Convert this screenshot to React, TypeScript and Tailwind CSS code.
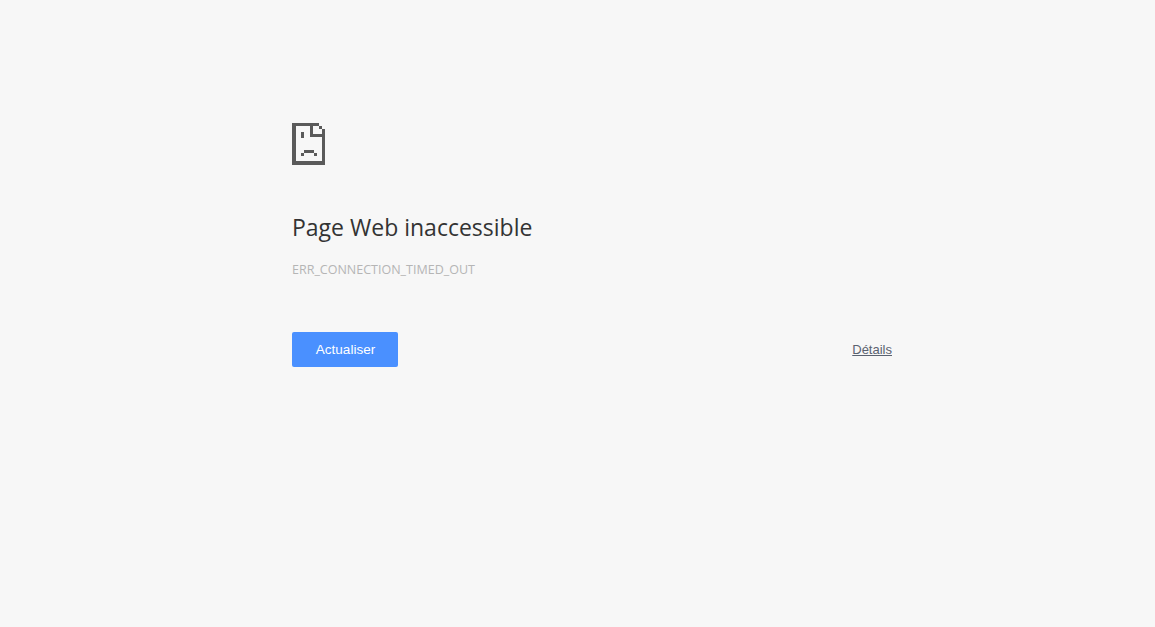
// Chrome style network error page
const rects: [number, number, number, number][] = [
  // outline
  [0, 0, 27, 3],
  [0, 0, 4, 42],
  [0, 38, 33, 4],
  [30, 6, 3, 36],
  [27, 3, 3, 3],
  // fold
  [18, 0, 3, 14],
  [18, 11, 15, 3],
  // eyes
  [9, 9, 3, 6],
  // mouth
  [12, 27, 10, 3],
  [9, 30, 3, 3],
  [22, 30, 3, 3],
]

function SadPageIcon() {
  return (
    <svg width="33" height="42" viewBox="0 0 33 42" shapeRendering="crispEdges" className="block">
      {rects.map(([x, y, w, h], i) => (
        <rect key={i} x={x} y={y} width={w} height={h} fill="#5a5a5a" />
      ))}
    </svg>
  )
}

export default function App() {
  return (
    <div className="min-h-[627px] bg-[#f7f7f7] pt-[123px] pl-[292px] font-['Open_Sans','Noto_Sans',sans-serif]">
      <div className="w-[600px]">
        <SadPageIcon />

        <h1 className="mt-[46px] text-[23px] leading-[32px] font-normal text-[#333333]">
          Page Web inaccessible
        </h1>
        <p className="mt-[19px] text-[12.5px] leading-[16px] text-[#b5b5b5]">
          ERR_CONNECTION_TIMED_OUT
        </p>

        <div className="mt-[54px] flex items-center justify-between">
          <button className="h-[35px] w-[106px] rounded-[2px] bg-[#4a90ff] pt-[1px] pl-[1px] text-[13.5px] font-medium text-white font-['Liberation_Sans',sans-serif]">
            Actualiser
          </button>
          <a className="text-[13px] text-[#5a6270] underline font-['Liberation_Sans',sans-serif]">Détails</a>
        </div>
      </div>
    </div>
  )
}
